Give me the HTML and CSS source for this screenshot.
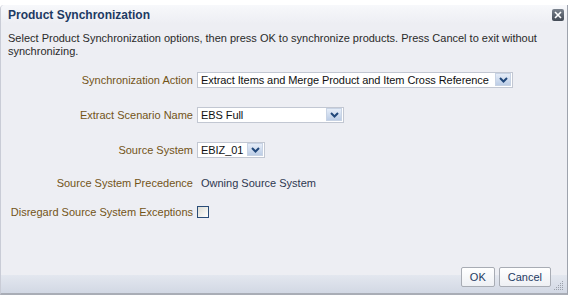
FILE: index.html
```html
<!DOCTYPE html>
<html lang="en">
<head>
    <meta charset="UTF-8">
    <title>Product Synchronization</title>
    <link rel="stylesheet" href="styles.css">
</head>
<body>
    <div class="dialog">
        <div class="header">
            <h1>Product Synchronization</h1>
            <span class="close" title="Close">
                <svg width="8" height="8" viewBox="0 0 8 8"><path d="M1 1L7 7M7 1L1 7" stroke="#fff" stroke-width="1.6"/></svg>
            </span>
        </div>

        <div class="content">
            <p class="intro">Select Product Synchronization options, then press OK to synchronize products. Press Cancel to exit without synchronizing.</p>

            <div class="form">
                <label>Synchronization Action</label>
                <div class="field">
                    <div class="select w-action">
                        <span class="select-value">Extract Items and Merge Product and Item Cross Reference</span>
                        <span class="select-btn"><svg width="9" height="6" viewBox="0 0 9 6"><path d="M1 1L4.5 4.5L8 1" fill="none" stroke="#21477a" stroke-width="2"/></svg></span>
                    </div>
                </div>

                <label>Extract Scenario Name</label>
                <div class="field">
                    <div class="select w-scenario">
                        <span class="select-value">EBS Full</span>
                        <span class="select-btn"><svg width="9" height="6" viewBox="0 0 9 6"><path d="M1 1L4.5 4.5L8 1" fill="none" stroke="#21477a" stroke-width="2"/></svg></span>
                    </div>
                </div>

                <label>Source System</label>
                <div class="field">
                    <div class="select w-source">
                        <span class="select-value">EBIZ_01</span>
                        <span class="select-btn"><svg width="9" height="6" viewBox="0 0 9 6"><path d="M1 1L4.5 4.5L8 1" fill="none" stroke="#21477a" stroke-width="2"/></svg></span>
                    </div>
                </div>

                <label>Source System Precedence</label>
                <div class="field">
                    <span class="value">Owning Source System</span>
                </div>

                <label>Disregard Source System Exceptions</label>
                <div class="field">
                    <span class="checkbox"></span>
                </div>
            </div>
        </div>

        <div class="footer">
            <button type="button">OK</button>
            <button type="button">Cancel</button>
            <svg class="grip" width="10" height="10" viewBox="0 0 10 10" fill="#9aa0aa">
                <rect x="8" y="0" width="1" height="1"/>
                <rect x="6" y="2" width="1" height="1"/><rect x="8" y="2" width="1" height="1"/>
                <rect x="4" y="4" width="1" height="1"/><rect x="6" y="4" width="1" height="1"/><rect x="8" y="4" width="1" height="1"/>
                <rect x="2" y="6" width="1" height="1"/><rect x="4" y="6" width="1" height="1"/><rect x="6" y="6" width="1" height="1"/><rect x="8" y="6" width="1" height="1"/>
                <rect x="0" y="8" width="1" height="1"/><rect x="2" y="8" width="1" height="1"/><rect x="4" y="8" width="1" height="1"/><rect x="6" y="8" width="1" height="1"/><rect x="8" y="8" width="1" height="1"/>
            </svg>
        </div>
    </div>
</body>
</html>
```

FILE: styles.css
```css
body {
    font-family: "Liberation Sans", Arial, sans-serif;
    font-size: 11px;
    background-color: #fff;
    margin: 0;
    padding: 0;
}
.dialog {
    width: 566px;
    height: 288px;
    margin-top: 5px;
    background-color: #edeef3;
    border-left: 1px solid #c9ccd6;
    border-right: 1px solid #9ea3ad;
    border-bottom: 2px solid #a9adb6;
    border-top-left-radius: 4px;
    display: flex;
    flex-direction: column;
    position: relative;
}
.header {
    height: 19px;
    display: flex;
    align-items: center;
    justify-content: space-between;
    padding: 0 3px 0 7px;
    background: linear-gradient(#f7f8fb, #edeef3);
    border-top-left-radius: 4px;
}
.header h1 {
    margin: 0;
    font-size: 12px;
    font-weight: bold;
    color: #1d3a63;
}
.close {
    width: 12px;
    height: 12px;
    border-radius: 2px;
    background: linear-gradient(#7a828d, #434a55);
    display: flex;
    align-items: center;
    justify-content: center;
}
.content {
    flex: 1;
    padding: 0 7px;
}
.intro {
    margin: 8px 0 0;
    line-height: 13px;
    color: #2a2a2a;
}
.form {
    display: grid;
    grid-template-columns: 185px auto;
    grid-template-rows: 35px 35px 35px 31px 27px;
    column-gap: 4px;
    margin-top: 4px;
    align-items: center;
}
.form label {
    text-align: right;
    color: #735417;
}
.field {
    display: flex;
    align-items: center;
}
.select {
    display: flex;
    align-items: center;
    height: 14px;
    padding: 0 1px 0 3px;
    background-color: #fff;
    border: 1px solid #c2c7d2;
    color: #111;
}
.w-action { width: 310px; }
.w-scenario { width: 141px; }
.w-source { width: 62px; }
.select-value {
    flex: 1;
    white-space: nowrap;
    overflow: hidden;
    letter-spacing: -0.08px;
}
.select-btn {
    width: 16px;
    height: 13px;
    display: flex;
    align-items: center;
    justify-content: center;
    background: linear-gradient(#e6edf8, #bccde6);
    border: 1px solid #c8d3e4;
    box-sizing: border-box;
}
.value {
    color: #2d3750;
    padding-left: 4px;
}
.checkbox {
    width: 10px;
    height: 10px;
    border: 1px solid #2a4d78;
    background: linear-gradient(135deg, #dcdcd4, #fff);
}
.footer {
    height: 27px;
    box-sizing: border-box;
    display: flex;
    justify-content: flex-end;
    align-items: flex-end;
    gap: 4px;
    padding: 0 16px 6px 0;
    background: linear-gradient(#edeef3 0, #edeef3 9px, #e3e7ef 9px, #d2d8e4 100%);
}
.footer button {
    height: 20px;
    padding: 0 8px;
    font-family: "Liberation Sans", Arial, sans-serif;
    font-size: 11px;
    color: #1d3a63;
    background: linear-gradient(#ffffff, #eef0f4);
    border: 1px solid #a8acb4;
    border-radius: 2px;
}
.grip {
    position: absolute;
    right: 3px;
    bottom: 2px;
}
```
